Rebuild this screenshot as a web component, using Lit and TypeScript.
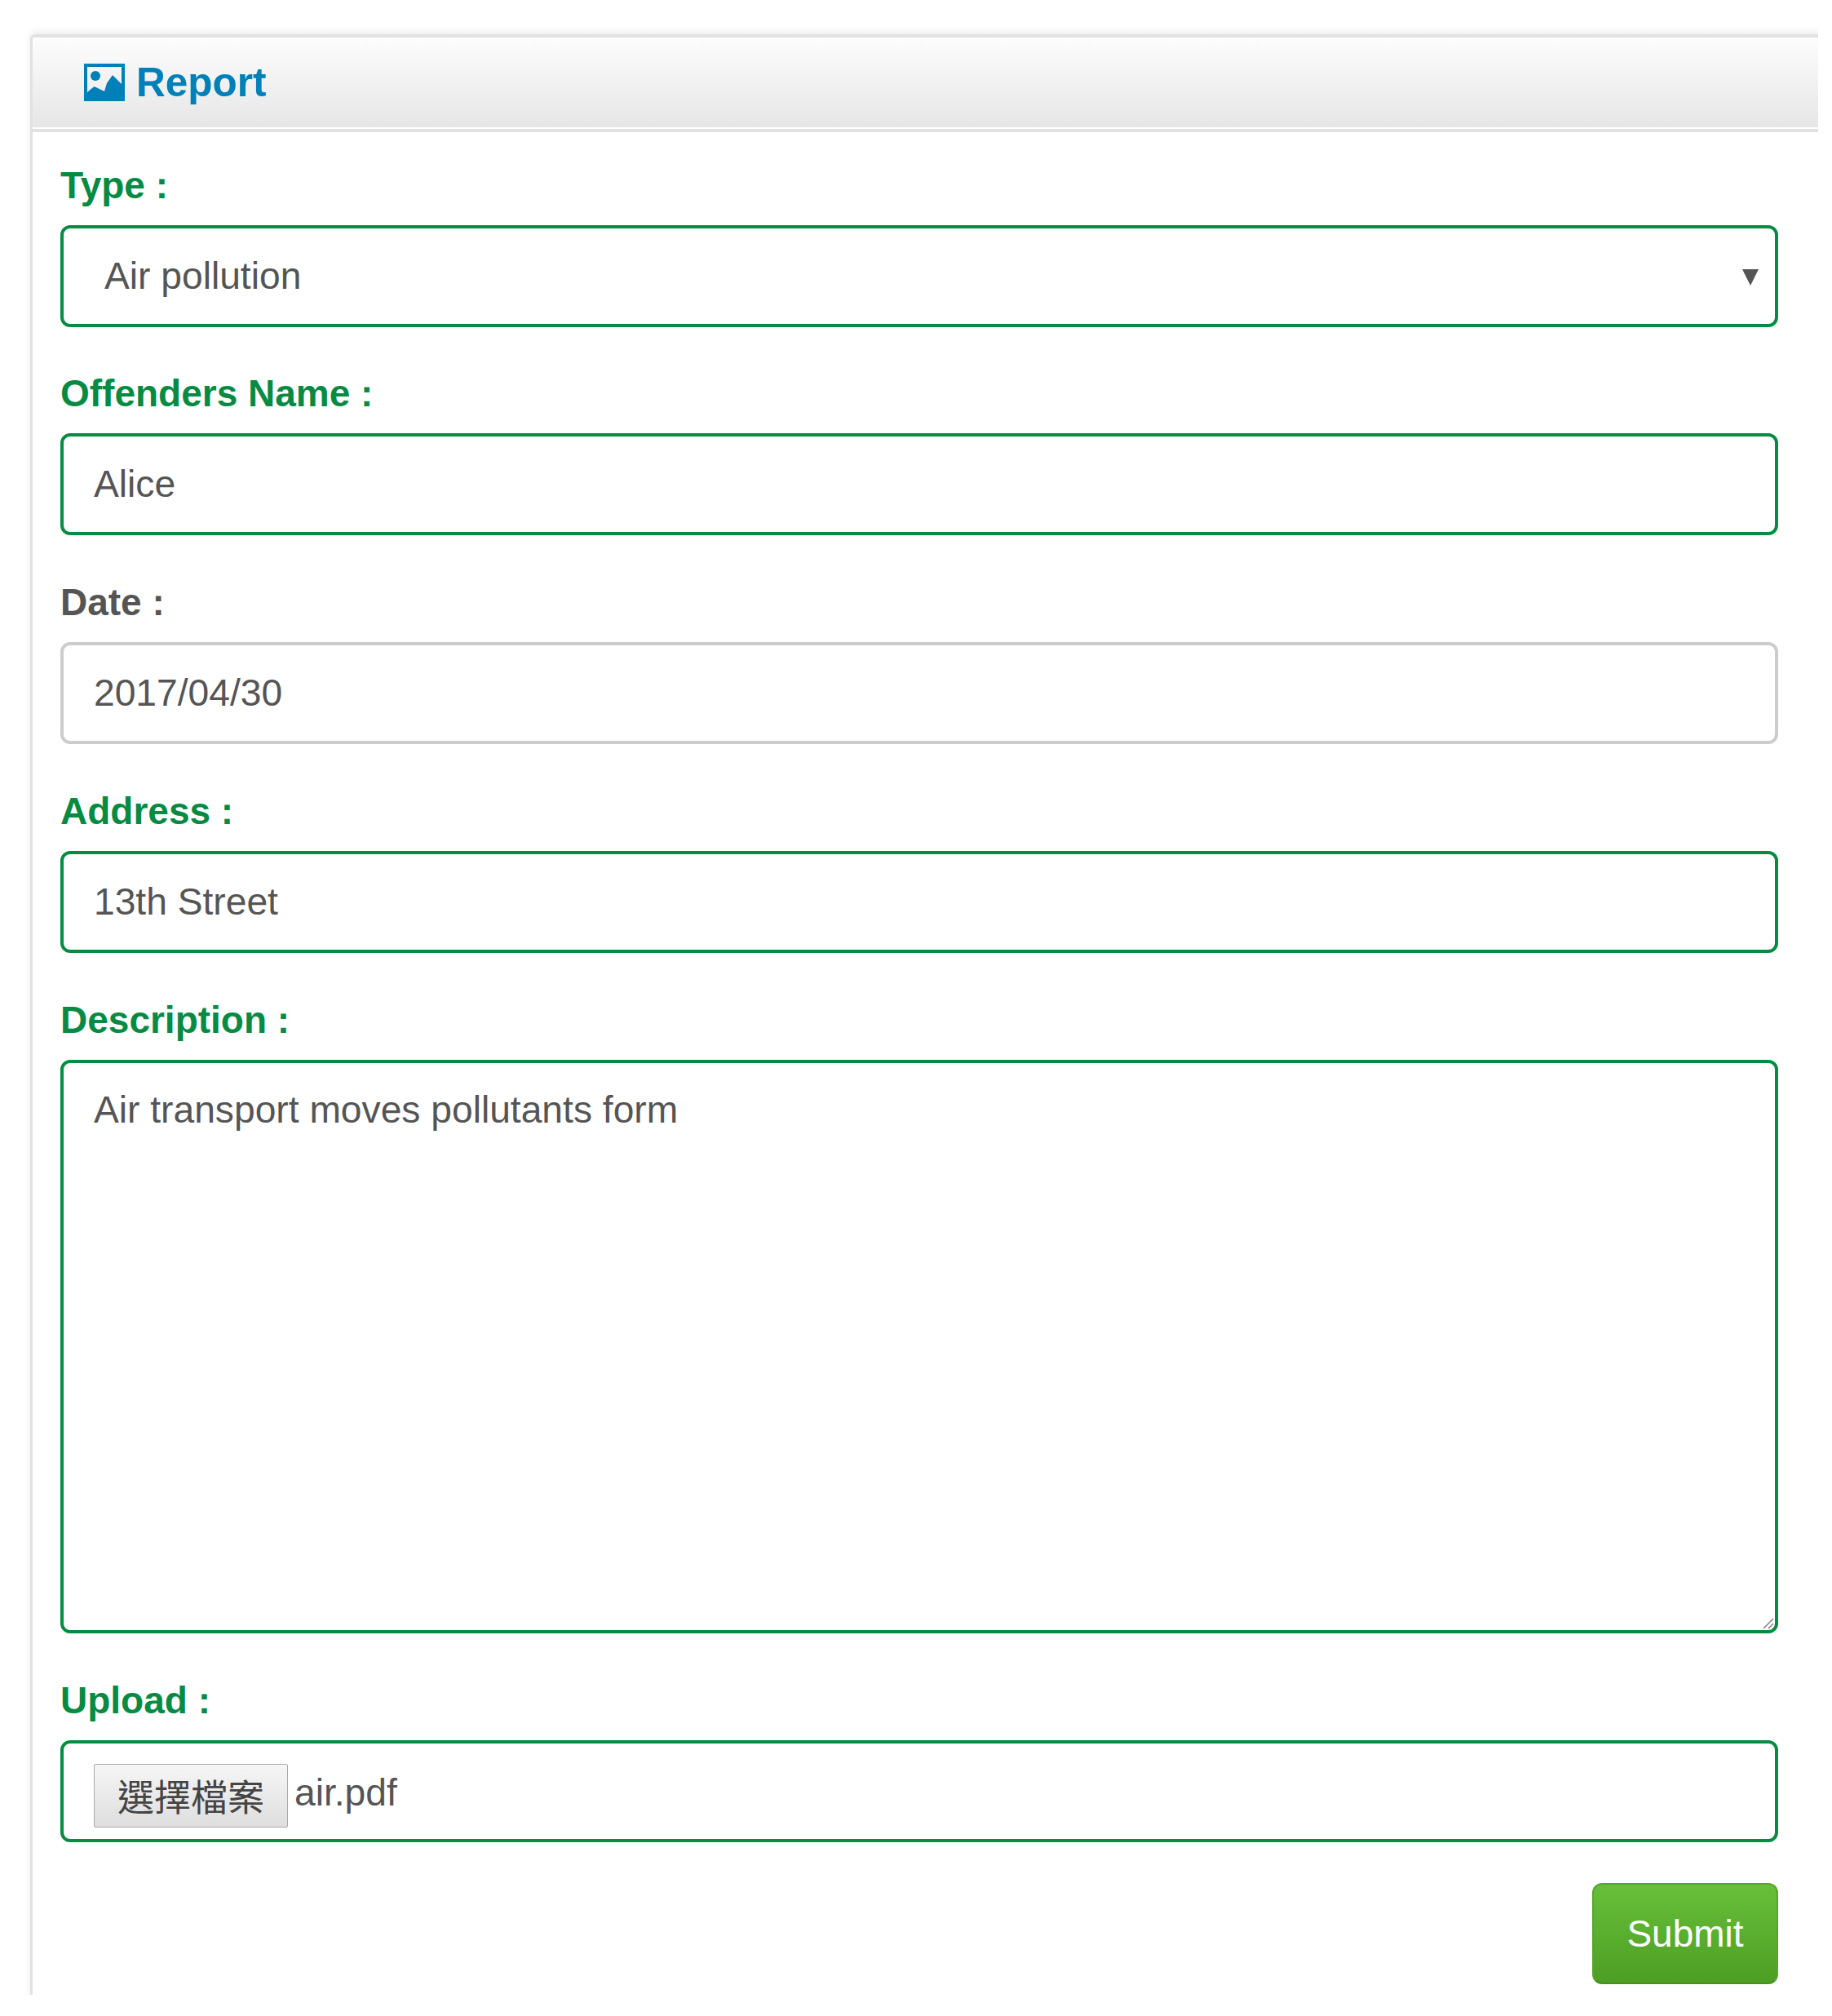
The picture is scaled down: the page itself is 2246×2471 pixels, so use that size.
import { LitElement, html, css } from 'lit';
import { customElement } from 'lit/decorators.js';

@customElement('app-root')
export class AppRoot extends LitElement {
  static styles = css`
    :host {
      display: block;
      height: 2471px;
      background: #fff;
      font-family: 'Liberation Sans', Arial, sans-serif;
      color: #555;
    }

    .clip {
      box-sizing: border-box;
      width: 2229px;
      height: 2445px;
      padding: 42px 0 0 37px;
      overflow: hidden;
    }

    .panel {
      box-sizing: border-box;
      width: 2212px;
      height: 2500px;
      border: 1px solid #e2e2e2;
      border-width: 4px 0 0 3px;
      border-top-left-radius: 6px;
      box-shadow: 0 -3px 10px rgba(0, 0, 0, 0.08);
      background: #fff;
    }

    .head {
      display: flex;
      align-items: center;
      gap: 14px;
      box-sizing: border-box;
      height: 116px;
      padding: 0 0 3px 63px;
      background: linear-gradient(#fdfdfd, #e6e6e6) no-repeat 0 0 / 100% 110px;
      border-bottom: 4px solid #e2e2e2;
      font-size: 49.5px;
      font-weight: 700;
      color: #0080b8;
    }

    .head svg {
      display: block;
      width: 50px;
      height: 46px;
      flex: none;
    }

    form {
      box-sizing: border-box;
      width: 2106px;
      margin-left: 34px;
      padding-top: 35px;
    }

    .field + .field {
      margin-top: 52px;
    }

    .field:first-child + .field {
      margin-top: 51px;
    }

    label {
      display: block;
      height: 60px;
      margin-bottom: 19px;
      font-size: 46px;
      font-weight: 700;
      line-height: 60px;
      color: #078b43;
    }

    .box {
      position: relative;
      box-sizing: border-box;
      height: 125px;
      padding: 0 37px;
      border: 4px solid #078b43;
      border-radius: 12px;
      font-size: 46.2px;
      line-height: 117px;
    }

    .select {
      padding-left: 50px;
    }

    .select::after {
      content: '';
      position: absolute;
      top: 50px;
      right: 20px;
      border: solid transparent;
      border-width: 20px 10px 0;
      border-top-color: #555;
    }

    .muted label {
      color: #555;
    }

    .muted .box {
      border-color: #ccc;
    }

    .area {
      height: 703px;
      line-height: 66px;
      padding-top: 24px;
    }

    .grip {
      position: absolute;
      right: 1px;
      bottom: 1px;
      width: 14px;
      height: 14px;
    }

    .upload {
      display: flex;
      align-items: flex-start;
      gap: 8px;
      padding-top: 25px;
      line-height: 70px;
    }

    .pick {
      box-sizing: border-box;
      width: 238px;
      height: 78px;
      border: 1px solid #a9a9a9;
      border-radius: 2px;
      background: linear-gradient(#f6f6f6, #dedede);
      font-family: 'Noto Sans CJK TC', sans-serif;
      font-size: 45px;
      line-height: 76px;
      text-align: center;
      color: #444;
    }

    .actions {
      display: flex;
      justify-content: flex-end;
      margin-top: 50px;
    }

    .submit {
      box-sizing: border-box;
      width: 228px;
      height: 124px;
      border: 2px solid #57a52c;
      border-bottom-color: #488f22;
      border-radius: 12px;
      background: linear-gradient(#67c039, #4d9e24);
      font-size: 46px;
      line-height: 120px;
      text-align: center;
      color: #fff;
    }
  `;

  protected render() {
    return html`
      <div class="clip">
        <section class="panel">
          <div class="head">
            <svg viewBox="0 0 50 46">
              <path fill="currentColor" fill-rule="evenodd" d="M0 0h50v46H0zM4 4v31l8.500-7 12.500 6 3-10 7-10 11 11V4z" />
              <circle cx="14" cy="15" r="6" fill="currentColor" />
            </svg>
            Report
          </div>
          <form>
            <div class="field">
              <label>Type :</label>
              <div class="box select">Air pollution</div>
            </div>
            <div class="field">
              <label>Offenders Name :</label>
              <div class="box">Alice</div>
            </div>
            <div class="field muted">
              <label>Date :</label>
              <div class="box">2017/04/30</div>
            </div>
            <div class="field">
              <label>Address :</label>
              <div class="box">13th Street</div>
            </div>
            <div class="field">
              <label>Description :</label>
              <div class="box area">
                Air transport moves pollutants form
                <svg class="grip" viewBox="0 0 14 14">
                  <path d="M1 13 13 1M7 13l6-6" stroke="#777" stroke-width="1.4" fill="none" />
                </svg>
              </div>
            </div>
            <div class="field">
              <label>Upload :</label>
              <div class="box upload">
                <div class="pick">選擇檔案</div>
                <span>air.pdf</span>
              </div>
            </div>
            <div class="actions">
              <div class="submit">Submit</div>
            </div>
          </form>
        </section>
      </div>
    `;
  }
}
